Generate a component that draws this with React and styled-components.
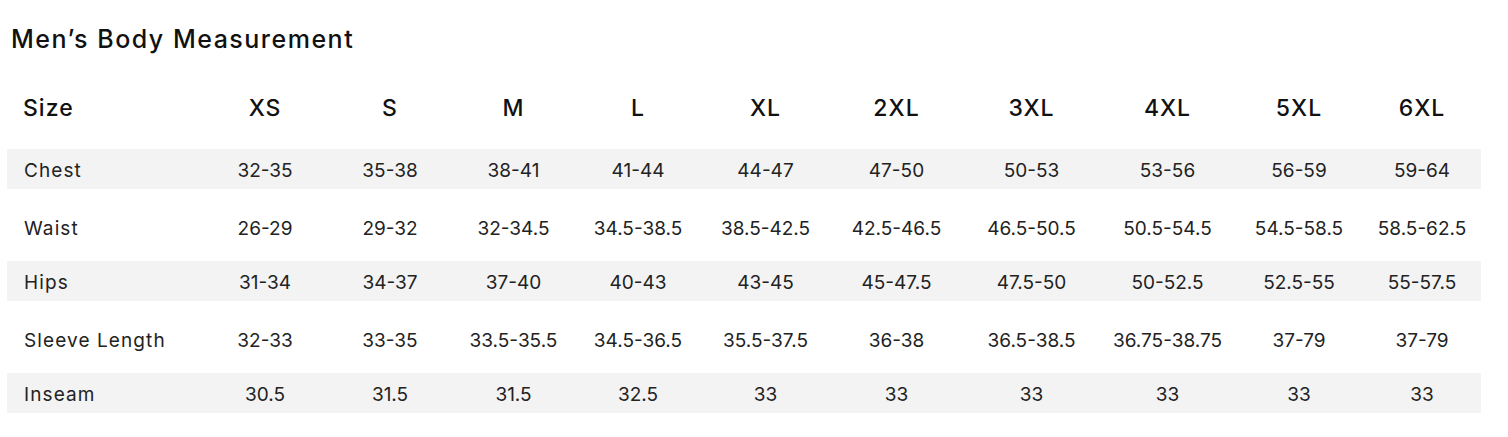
import React from "react";
import styled, { createGlobalStyle } from "styled-components";

const GlobalStyle = createGlobalStyle`
  html, body { margin: 0; padding: 0; background: #ffffff; }
  body { font-family: Inter, "Open Sans", Arial, sans-serif; color: #1c1c1c; }
`;

const Page = styled.div`
  width: 1508px;
  height: 437px;
  padding: 0 0 0 7px;
  box-sizing: border-box;
`;

const Title = styled.h2`
  margin: 0;
  padding: 24px 0 0 4px;
  height: 67px;
  box-sizing: border-box;
  font-size: 25px;
  line-height: 30px;
  font-weight: 500;
  letter-spacing: 1.5px;
  color: #111;
`;

const Table = styled.table`
  width: 1474px;
  table-layout: fixed;
  border-collapse: collapse;
  border-spacing: 0;
`;

const HeadRow = styled.tr`
  height: 82px;
`;

const Row = styled.tr`
  height: ${(p) => (p.$shaded ? "40px" : "72px")};
  background: ${(p) => (p.$shaded ? "#f3f3f3" : "transparent")};
`;

const HeadCell = styled.th`
  padding: 0;
  font-size: 23px;
  font-weight: 500;
  letter-spacing: 1px;
  color: #111;
  text-align: ${(p) => (p.$first ? "left" : "center")};
  padding-left: ${(p) => (p.$first ? "16px" : "0")};
  vertical-align: middle;
`;

const Cell = styled.td`
  padding: ${(p) => (p.$shaded ? "3px 0 0" : "7px 0 0")};
  font-size: 19px;
  color: #222;
  letter-spacing: ${(p) => (p.$first ? "1.1px" : "0")};
  text-align: ${(p) => (p.$first ? "left" : "center")};
  padding-left: ${(p) => (p.$first ? "17px" : "0")};
  vertical-align: middle;
  white-space: nowrap;
`;

const widths = [195, 126, 124, 123, 126, 129, 133, 137, 135, 128, 118];
const sizes = ["XS", "S", "M", "L", "XL", "2XL", "3XL", "4XL", "5XL", "6XL"];
const rows = [
  ["Chest", "32-35", "35-38", "38-41", "41-44", "44-47", "47-50", "50-53", "53-56", "56-59", "59-64"],
  ["Waist", "26-29", "29-32", "32-34.5", "34.5-38.5", "38.5-42.5", "42.5-46.5", "46.5-50.5", "50.5-54.5", "54.5-58.5", "58.5-62.5"],
  ["Hips", "31-34", "34-37", "37-40", "40-43", "43-45", "45-47.5", "47.5-50", "50-52.5", "52.5-55", "55-57.5"],
  ["Sleeve Length", "32-33", "33-35", "33.5-35.5", "34.5-36.5", "35.5-37.5", "36-38", "36.5-38.5", "36.75-38.75", "37-79", "37-79"],
  ["Inseam", "30.5", "31.5", "31.5", "32.5", "33", "33", "33", "33", "33", "33"],
];

export default function App() {
  return (
    <Page>
      <GlobalStyle />
      <Title>Men’s Body Measurement</Title>
      <Table>
        <colgroup>
          {widths.map((w, i) => (
            <col key={i} style={{ width: w }} />
          ))}
        </colgroup>
        <thead>
          <HeadRow>
            <HeadCell $first>Size</HeadCell>
            {sizes.map((s) => (
              <HeadCell key={s}>{s}</HeadCell>
            ))}
          </HeadRow>
        </thead>
        <tbody>
          {rows.map((r, i) => (
            <Row key={r[0]} $shaded={i % 2 === 0}>
              {r.map((c, j) => (
                <Cell key={j} $first={j === 0} $shaded={i % 2 === 0}>
                  {c}
                </Cell>
              ))}
            </Row>
          ))}
        </tbody>
      </Table>
    </Page>
  );
}
